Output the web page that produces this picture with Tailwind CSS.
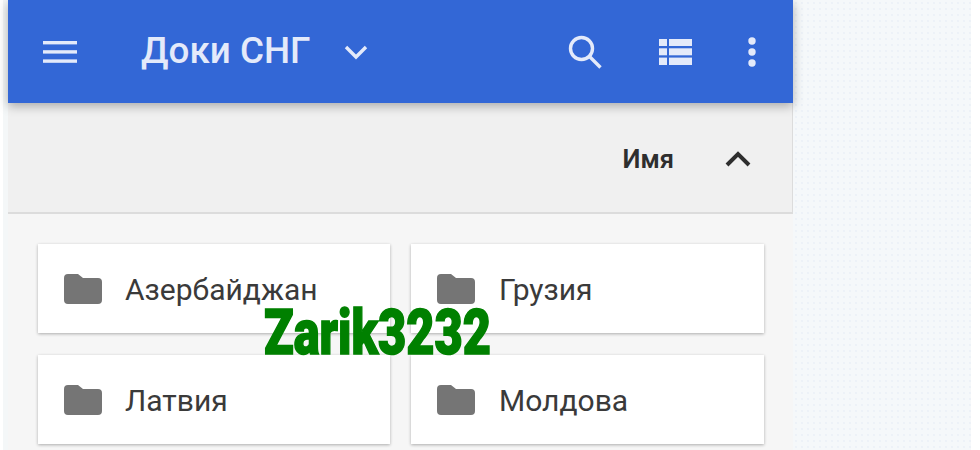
<!DOCTYPE html>
<html lang="ru">
<head>
  <meta charset="UTF-8">
  <title>Доки СНГ</title>
  <script src="https://cdn.jsdelivr.net/npm/@tailwindcss/browser@4"></script>
</head>
<body class="bg-white font-['Roboto',sans-serif] overflow-hidden">
  <div class="relative w-[980px] h-[450px] overflow-hidden flex">
    <!-- поля слева -->
    <div class="w-[3px] bg-white"></div>
    <div class="w-[5px] bg-[#f4f7f8]"></div>

    <!-- приложение -->
    <div class="w-[785px] h-[450px] flex flex-col bg-[#f6f6f6]">
      <header class="relative z-10 h-[103px] bg-[#3367d6] flex items-center text-[#e4eafa] shadow-[0_3px_10px_rgba(0,0,0,0.3)]">
        <svg class="ml-[35px] w-[36px] h-[24px]" viewBox="0 0 36 24" fill="currentColor"><rect y="1" width="34" height="3.4"/><rect y="10.2" width="34" height="3.4"/><rect y="19.4" width="34" height="3.4"/></svg>
        <span class="ml-[62px] w-[204px] text-[36.8px] leading-none font-medium -mt-[1px]">Доки СНГ</span>
        <svg class="-ml-[1px] w-[24px] h-[16px]" viewBox="0 0 24 16" fill="none" stroke="currentColor" stroke-width="3.4"><path d="M2 3l10 10L22 3"/></svg>
        <svg class="ml-[200px] w-[34px] h-[34px]" viewBox="0 0 34 34" fill="none" stroke="currentColor" stroke-width="3.4"><circle cx="13.5" cy="13.5" r="11"/><path d="M21.5 21.5L32.5 32.5"/></svg>
        <svg class="ml-[57px] w-[33px] h-[28px]" viewBox="0 0 33 28" fill="currentColor"><rect y="1" width="8" height="7"/><rect y="10.3" width="8" height="7"/><rect y="19.6" width="8" height="7.4"/><rect x="10" y="1" width="23" height="7"/><rect x="10" y="10.3" width="23" height="7"/><rect x="10" y="19.6" width="23" height="7.4"/></svg>
        <svg class="ml-[56px] w-[8px] h-[32px]" viewBox="0 0 8 32" fill="currentColor"><circle cx="4" cy="5" r="3.7"/><circle cx="4" cy="16" r="3.7"/><circle cx="4" cy="27" r="3.7"/></svg>
      </header>

      <div class="h-[111px] shrink-0 bg-[#f0f0f0] border-b-2 border-r border-[#dcdcdc] flex items-center justify-end pr-[41px]">
        <span class="text-[25.5px] font-semibold text-[#2e2e2e] leading-none mt-[4px]">Имя</span>
        <svg class="ml-[51px] w-[26px] h-[18px] mt-[3px]" viewBox="0 0 26 18" fill="none" stroke="#2e2e2e" stroke-width="4"><path d="M2 15L13 4l11 11"/></svg>
      </div>

      <div class="grid grid-cols-[352px_353px] gap-x-[21px] gap-y-[22px] pl-[30px] pt-[30px]">
        <div class="h-[89px] bg-white shadow-[0_1px_3px_rgba(0,0,0,0.3)] flex items-center pl-[26px]">
          <svg class="w-[38px] h-[30px] shrink-0" viewBox="0 0 38 30" fill="#757575"><path d="M4 0h10l5 4h15a4 4 0 0 1 4 4v18a4 4 0 0 1-4 4H4a4 4 0 0 1-4-4V4a4 4 0 0 1 4-4z"/></svg>
          <span class="ml-[23px] text-[30px] leading-none text-[#3a3a3a] mt-[2px]">Азербайджан</span>
        </div>
        <div class="h-[89px] bg-white shadow-[0_1px_3px_rgba(0,0,0,0.3)] flex items-center pl-[26px]">
          <svg class="w-[38px] h-[30px] shrink-0" viewBox="0 0 38 30" fill="#757575"><path d="M4 0h10l5 4h15a4 4 0 0 1 4 4v18a4 4 0 0 1-4 4H4a4 4 0 0 1-4-4V4a4 4 0 0 1 4-4z"/></svg>
          <span class="ml-[24px] text-[30px] leading-none text-[#3a3a3a] mt-[2px]">Грузия</span>
        </div>
        <div class="h-[89px] bg-white shadow-[0_1px_3px_rgba(0,0,0,0.3)] flex items-center pl-[26px]">
          <svg class="w-[38px] h-[30px] shrink-0" viewBox="0 0 38 30" fill="#757575"><path d="M4 0h10l5 4h15a4 4 0 0 1 4 4v18a4 4 0 0 1-4 4H4a4 4 0 0 1-4-4V4a4 4 0 0 1 4-4z"/></svg>
          <span class="ml-[23px] text-[30px] leading-none text-[#3a3a3a] mt-[2px]">Латвия</span>
        </div>
        <div class="h-[89px] bg-white shadow-[0_1px_3px_rgba(0,0,0,0.3)] flex items-center pl-[26px]">
          <svg class="w-[38px] h-[30px] shrink-0" viewBox="0 0 38 30" fill="#757575"><path d="M4 0h10l5 4h15a4 4 0 0 1 4 4v18a4 4 0 0 1-4 4H4a4 4 0 0 1-4-4V4a4 4 0 0 1 4-4z"/></svg>
          <span class="ml-[24px] text-[30px] leading-none text-[#3a3a3a] mt-[2px]">Молдова</span>
        </div>
      </div>
    </div>

    <!-- панель справа -->
    <div class="w-[178px] bg-[#f5f8fa] bg-[radial-gradient(#edf1f7_0.7px,transparent_0.8px)] bg-[length:6px_6px]"></div>

    <!-- водяной знак -->
    <span class="absolute left-[264px] top-[302px] text-[58px] leading-[60px] font-black text-[#008000] origin-left scale-x-[0.84] scale-y-[1.08] whitespace-nowrap [-webkit-text-stroke:1.5px_#008000]">Zarik3232</span>
  </div>
</body>
</html>
